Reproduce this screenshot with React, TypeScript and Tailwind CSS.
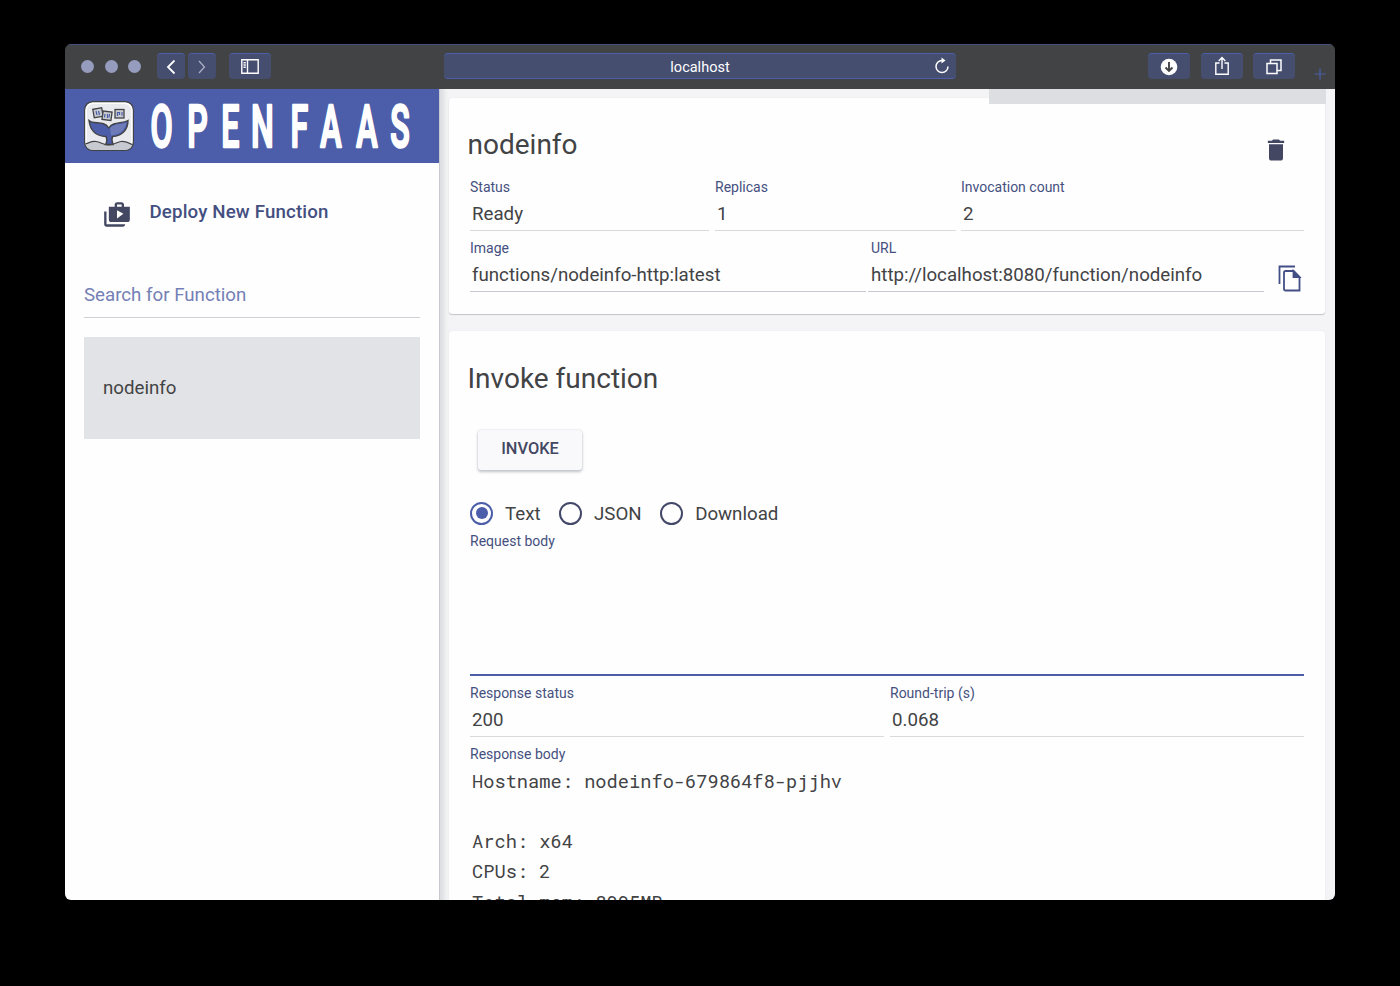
import React from "react";
import { MdShopTwo, MdDelete } from "react-icons/md";

function WhaleLogo() {
  return (
    <svg width="50" height="50" viewBox="0 0 50 50" className="shrink-0">
      <defs>
        <clipPath id="badge"><rect x="1" y="1" width="48" height="48" rx="8" /></clipPath>
      </defs>
      <rect x="0.7" y="0.7" width="48.6" height="48.6" rx="8" fill="#e9eaed" stroke="#424345" strokeWidth="1.4" />
      <rect x="2.2" y="2.2" width="45.6" height="45.6" rx="7" fill="none" stroke="#fefefe" strokeWidth="1.6" />
      <path clipPath="url(#badge)" d="M1 43C5 42 7 40 12 40.500S19 44 24.500 44S33 41 37 40.500S45 42 49 44V50H1Z" fill="#c7cad0" stroke="#424345" strokeWidth="1.2" />
      <path d="M5 19.500C10 24 20 19 24.800 27C29 20 38 23 44 19.500C44 29 38 35 28.500 35.500C27.500 38 28 41 29 43.500H21.500C23 41 23 38 22 35.500C11 35 6 28 5 19.500Z" fill="#4c5ea9" stroke="#424345" strokeWidth="1.4" />
      <path d="M26 27C30 22 37 24 42.500 21.500C41 29 36 33.500 27 34.500Z" fill="#6d7bb8" />
      <g fill="#c7cad0" stroke="#424345" strokeWidth="1.3">
        <rect x="9.500" y="7.500" width="9" height="8.500" transform="rotate(-10 14 12)" />
        <rect x="18.500" y="10.500" width="9" height="8.500" transform="rotate(8 23 15)" />
        <rect x="31" y="8.500" width="9" height="8.500" />
      </g>
      <path d="M12 10l1 4M14.500 10l1 4M21 13l-.5 3.500M23.500 13v4M25.500 13l-.5 3.500M33.500 15v-3.500h2V14M38 11v3.500" stroke="#4c5ea9" strokeWidth="1.2" fill="none" />
    </svg>
  );
}

function Wordmark() {
  return (
    <svg width="270" height="74" viewBox="0 0 270 74" className="shrink-0">
      <text
        transform="scale(0.54 1)"
        x="3 71 134 189 262 317 384 447"
        y="58.5"
        fontFamily="Roboto, sans-serif"
        fontWeight="500"
        fontSize="59.5"
        fill="#fefefe"
        stroke="#fefefe"
        strokeWidth="2.6"
        strokeLinejoin="round"
      >
        OPENFAAS
      </text>
    </svg>
  );
}

function CopyIcon() {
  return (
    <svg width="24" height="27" viewBox="0 0 24 27" fill="none" stroke="#434f86" strokeWidth="1.8">
      <path d="M1.500 19V1.500H17" />
      <path d="M7.500 6H15.500L21.500 12V25.500H7.500Q6 25.500 6 24V7.500Q6 6 7.500 6Z" />
      <path d="M15.500 6V12H21.500Z" fill="#434f86" />
    </svg>
  );
}

function ToolButton({ className, children }: { className: string; children?: React.ReactNode }) {
  return (
    <div className={`flex h-[26px] items-center justify-center rounded-[4px] border-t border-[#4c5ea9] bg-[#464e70] text-[#fefefe] ${className}`}>
      {children}
    </div>
  );
}

function TitleBar() {
  return (
    <div className="flex h-[45px] shrink-0 items-start border-t border-[#45507f] bg-[#424345] pt-[8px]">
      <div className="ml-[16px] mt-[7px] flex gap-[10.5px]">
        <span className="size-[13px] rounded-full bg-[#959cbd]" />
        <span className="size-[13px] rounded-full bg-[#959cbd]" />
        <span className="size-[13px] rounded-full bg-[#959cbd]" />
      </div>
      <ToolButton className="ml-[16px] w-[28px]">
        <svg width="10" height="16" viewBox="0 0 10 16" fill="none" stroke="currentColor" strokeWidth="1.8"><path d="M8.500 1.500L2 8L8.500 14.500" /></svg>
      </ToolButton>
      <ToolButton className="ml-[3px] w-[28px]">
        <svg width="10" height="16" viewBox="0 0 10 16" fill="none" stroke="#a9aec4" strokeWidth="1.3"><path d="M2 2L7.500 8L2 14" /></svg>
      </ToolButton>
      <ToolButton className="ml-[13px] w-[42px]">
        <svg width="18" height="15" viewBox="0 0 18 15" fill="none" stroke="currentColor" strokeWidth="1.4"><path d="M.8.8H17.200V14.200H.8ZM6.500.8V14.200M2.500 3.700H4.800M2.500 6H4.800M2.500 8.300H4.800" /></svg>
      </ToolButton>
      <div className="ml-[173px] flex h-[26px] w-[512px] items-center rounded-[4px] border-y border-[#4c5ea9] bg-[#464e70] pl-[22px] pr-[6px] text-[#fefefe]">
        <span className="flex-1 pt-[4px] text-center text-[14.500px] leading-[20px]">localhost</span>
        <svg width="16" height="18" viewBox="0 0 16 18" fill="none" stroke="currentColor" strokeWidth="1.5"><path d="M8 3.500A6 6 0 1 0 14 9.500" /><path d="M7.500.5L11.500 3.600L7.500 6.500Z" fill="currentColor" stroke="none" /></svg>
      </div>
      <ToolButton className="ml-[192px] w-[42px]">
        <svg width="18" height="18" viewBox="0 0 18 18"><circle cx="9" cy="9" r="8.300" fill="currentColor" /><path d="M9 4V13M5.500 9.500L9 13L12.500 9.500" stroke="#424345" strokeWidth="1.900" fill="none" /></svg>
      </ToolButton>
      <ToolButton className="ml-[11px] w-[42px]">
        <svg width="16" height="20" viewBox="0 0 16 20" fill="none" stroke="currentColor" strokeWidth="1.400" className="mb-[1px]"><path d="M5.500 7H1.800V18.300H14.200V7H10.500M8 13V2M4.700 5L8 1.600L11.300 5" /></svg>
      </ToolButton>
      <ToolButton className="ml-[10px] w-[42px]">
        <svg width="16" height="16" viewBox="0 0 16 16" fill="none" stroke="currentColor" strokeWidth="1.500"><path d="M1 4.500H11V14.500H1ZM4.500 4.500V1H15V11.500H11" /></svg>
      </ToolButton>
      <svg width="12" height="12" viewBox="0 0 12 12" stroke="#4c5ea9" strokeWidth="1.200" className="ml-[19px] mt-[15px]"><path d="M6 .5V11.500M.5 6H11.500" /></svg>
    </div>
  );
}

function Field({ label, value, className, inset = "pl-[2px]", rule = "border-[#d8dade]" }: {
  label: string; value: string; className: string; inset?: string; rule?: string;
}) {
  return (
    <div className={`h-[52px] border-b ${rule} ${className}`}>
      <div className="h-[23px] text-[14px] leading-[16px] text-[#45507f]">{label}</div>
      <div className={`text-[18.700px] leading-[24px] text-[#424345] ${inset}`}>{value}</div>
    </div>
  );
}

function Radio({ label, checked, className }: { label: string; checked?: boolean; className?: string }) {
  return (
    <label className={`flex items-center ${className ?? ""}`}>
      <span className={`flex size-[23px] items-center justify-center rounded-full border-[2px] ${checked ? "border-[#4c5ea9]" : "border-[#434869]"}`}>
        {checked && <span className="size-[12px] rounded-full bg-[#4c5ea9]" />}
      </span>
      <span className="ml-[12px] pt-[1px] text-[18.700px] leading-[24px]">{label}</span>
    </label>
  );
}

function Sidebar() {
  return (
    <aside className="flex w-[374px] shrink-0 flex-col bg-[#fefefe]">
      <div className="flex h-[74px] shrink-0 items-start bg-[#4c5ea9] pl-[19px]">
        <div className="mt-[12px]"><WhaleLogo /></div>
        <div className="ml-[15px]"><Wordmark /></div>
      </div>
      <div className="mt-[36px] flex h-[30px] items-center pl-[38px]">
        <MdShopTwo className="mt-[1px] size-[28px] text-[#434762]" />
        <span className="-mt-[5px] ml-[18.500px] text-[18.700px] font-medium leading-[24px] tracking-[0.150px] text-[#444f80]">Deploy New Function</span>
      </div>
      <div className="mx-[19px] mt-[54px] h-[35px] border-b border-[#cfd1d6] text-[18.700px] leading-[24px] text-[#7480b6]">Search for Function</div>
      <div className="mx-[19px] mt-[19px] flex h-[102px] items-center bg-[#e2e3e6] pl-[19px] text-[18.700px] text-[#424345]">nodeinfo</div>
    </aside>
  );
}

export default function App() {
  return (
    <div className="h-[986px] w-[1400px] overflow-hidden bg-black pl-[65px] pt-[44px] font-['Roboto',sans-serif] text-[#424345]">
      <div className="flex h-[855.500px] w-[1270px] flex-col overflow-hidden rounded-[6px]">
        <TitleBar />
        <div className="flex min-h-0 flex-1">
          <Sidebar />
          <main className="relative flex-1 overflow-hidden border-l border-[#c7cad0] bg-[#f4f4f6] pl-[9px] pr-[10px] pt-[9px] shadow-[inset_8px_0_5px_-4px_#dcdde1]">
            <section className="h-[216px] rounded-[3px] bg-[#fefefe] pl-[21px] pt-[31px] shadow-[0_1px_1px_#c0c3ca,0_0_1px_#d5d7db]">
              <div className="flex h-[50px] items-start justify-between pr-[35px]">
                <h1 className="-ml-[2.500px] text-[28px] leading-[32px]">nodeinfo</h1>
                <MdDelete className="mt-[7px] size-[28px] text-[#434762]" />
              </div>
              <div className="flex">
                <Field label="Status" value="Ready" className="w-[239px]" />
                <Field label="Replicas" value="1" className="ml-[6px] w-[241px]" />
                <Field label="Invocation count" value="2" className="ml-[5px] w-[343px]" />
              </div>
              <div className="mt-[9px] flex">
                <Field label="Image" value="functions/nodeinfo-http:latest" className="w-[396px]" rule="border-[#c7cad0]" />
                <Field label="URL" value="http://localhost:8080/function/nodeinfo" className="ml-[2px] w-[396px] pl-[3px]" inset="" rule="border-[#c7cad0]" />
                <div className="ml-[14px] mt-[25px]"><CopyIcon /></div>
              </div>
            </section>
            <section className="mt-[17px] h-[700px] rounded-[3px] bg-[#fefefe] pl-[21px] pt-[32px] shadow-[0_0_1px_#d5d7db]">
              <h2 className="-ml-[2.500px] text-[28px] leading-[32px]">Invoke function</h2>
              <button className="ml-[8px] mt-[35px] flex h-[40px] w-[104px] items-center justify-center rounded-[3px] bg-[#f9f9fb] pb-[1px] text-[16.400px] font-medium text-[#434762] shadow-[0_2px_3px_#c0c3ca,0_0_2px_#d0d2d7]">INVOKE</button>
              <div className="mt-[31px] flex h-[24px] items-center">
                <Radio label="Text" checked />
                <Radio label="JSON" className="ml-[18.500px]" />
                <Radio label="Download" className="ml-[18.500px]" />
              </div>
              <div className="mt-[8px] h-[143px] w-[834px] border-b-[2px] border-[#4c5ea9] text-[14px] leading-[16px] text-[#45507f]">Request body</div>
              <div className="mt-[9px] flex">
                <Field label="Response status" value="200" className="w-[414px]" />
                <Field label="Round-trip (s)" value="0.068" className="ml-[6px] w-[414px]" />
              </div>
              <div className="mt-[9px] text-[14px] leading-[16px] text-[#45507f]">Response body</div>
              <pre className="mt-[3.500px] pl-[2px] font-['Roboto_Mono','Liberation_Mono',monospace] text-[18.700px] leading-[30.300px] text-[#424345]">{`Hostname: nodeinfo-679864f8-pjjhv

Arch: x64
CPUs: 2
Total mem: 8995MB`}</pre>
            </section>
            <div className="absolute left-[549px] top-0 h-[15px] w-[337px] bg-[#dddee2]" />
          </main>
        </div>
      </div>
    </div>
  );
}
